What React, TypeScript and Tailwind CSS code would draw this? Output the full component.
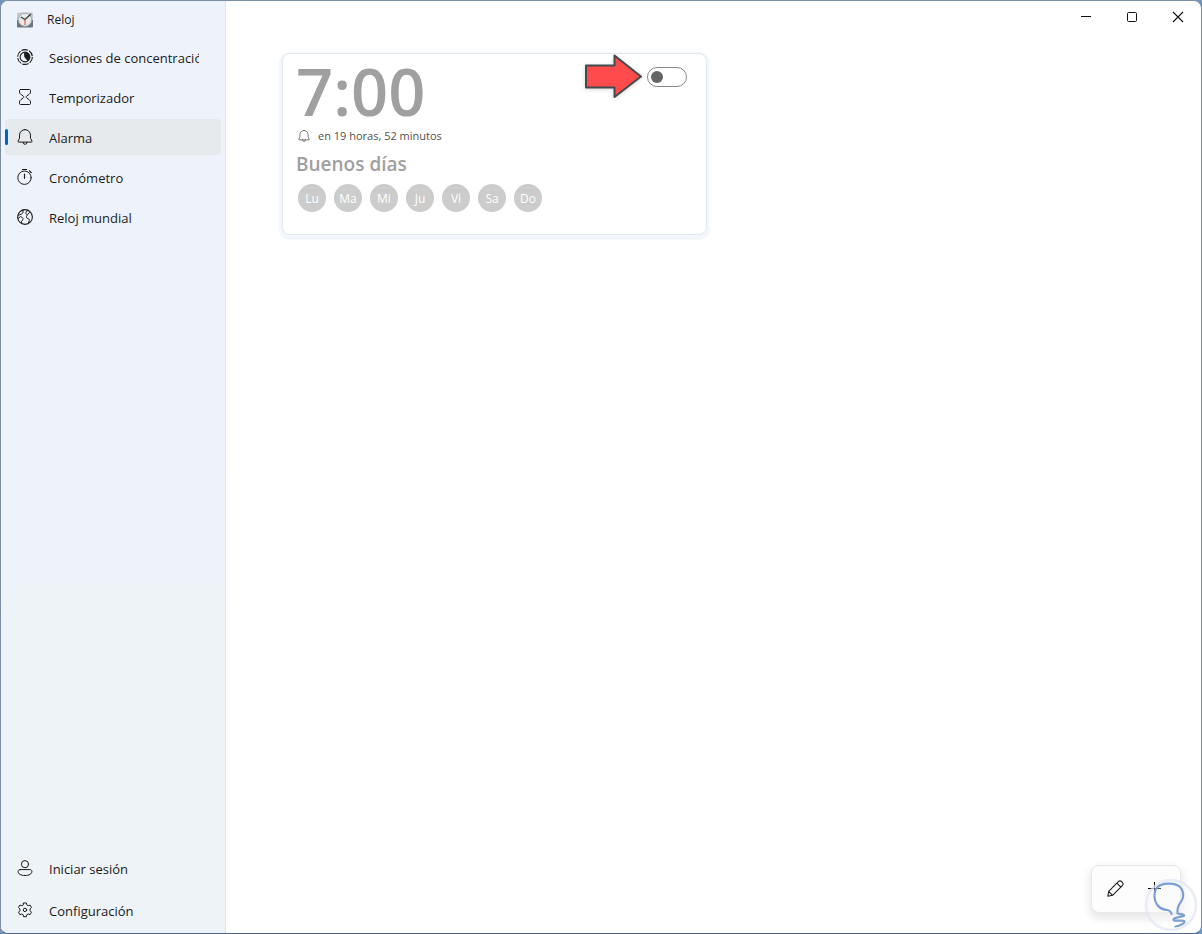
import { useState } from "react";
import type { ReactNode } from "react";

type NavItem = {
  id: string;
  label: string;
  icon: ReactNode;
};

const days = ["Lu", "Ma", "Mi", "Ju", "Vi", "Sa", "Do"];

function Icon({ children, className = "h-4 w-4" }: { children: ReactNode; className?: string }) {
  return (
    <svg
      viewBox="0 0 16 16"
      className={`shrink-0 ${className}`}
      fill="none"
      stroke="currentColor"
      strokeWidth="1"
      strokeLinecap="round"
      strokeLinejoin="round"
      aria-hidden="true"
    >
      {children}
    </svg>
  );
}

function BellIcon({ className }: { className?: string }) {
  return (
    <Icon className={className}>
      <path d="M8 .6a5.500 5.500 0 0 0-5.500 5.500v3.100L1 12.200c-.2.5.1.9.6.9h12.800c.5 0 .8-.4.6-.9l-1.500-3V6.100A5.500 5.500 0 0 0 8 .6Z" />
      <path d="M6 13.300a2 2 0 0 0 4 0" />
    </Icon>
  );
}

const topItems: NavItem[] = [
  {
    id: "focus",
    label: "Sesiones de concentración",
    icon: (
      <Icon>
        <circle cx="8" cy="8" r="7.400" strokeWidth="1.100" strokeDasharray="6.550 1.200" strokeLinecap="butt" />
        <circle cx="8" cy="8" r="4.900" strokeWidth="1.100" />
        <path d="M8 3.500a4.500 4.500 0 0 1 2.800 8L8 8.200Z" fill="currentColor" />
      </Icon>
    ),
  },
  {
    id: "timer",
    label: "Temporizador",
    icon: (
      <Icon>
        <path d="M3.500.5h9c.6 0 1 .4 1 1v1.600c0 .9-.5 1.600-1.200 2.100L9.600 7.200c-.6.4-.6 1.200 0 1.600l2.700 2c.7.5 1.200 1.200 1.200 2.100v1.600c0 .6-.4 1-1 1h-9c-.6 0-1-.4-1-1v-1.600c0-.9.5-1.600 1.200-2.100l2.700-2c.6-.4.6-1.200 0-1.600l-2.700-2C3 4.700 2.500 4 2.500 3.100V1.500c0-.6.4-1 1-1Z" />
      </Icon>
    ),
  },
  { id: "alarm", label: "Alarma", icon: <BellIcon /> },
  {
    id: "stopwatch",
    label: "Cronómetro",
    icon: (
      <Icon>
        <circle cx="7.500" cy="8.700" r="6.700" />
        <path d="M5.500.5h4M7.500 5v4.300M12.500 2l1.700 1.500" strokeWidth="1.200" />
      </Icon>
    ),
  },
  {
    id: "world",
    label: "Reloj mundial",
    icon: (
      <Icon>
        <circle cx="8" cy="8" r="7.400" strokeWidth="1.100" />
        <path d="M6 1v2.200c0 .8-.5 1.300-1.300 1.700L2 6.200M1 9.500l2.500-2 2 1.200c.8.5.8 1.300.3 2L4.500 12.500l.3 2M10.500 1.200 9 3.500c-.4.700-.2 1.300.4 1.700l.9.8-.8 1.500c-.3.700 0 1.300.6 1.600l1.700.8c.5.3.7.8.5 1.400l-.8 2.500M12.500 3.500l-1.800 2" />
      </Icon>
    ),
  },
];

const bottomItems: NavItem[] = [
  {
    id: "login",
    label: "Iniciar sesión",
    icon: (
      <Icon>
        <circle cx="8" cy="4.200" r="3.600" />
        <path d="M3.200 9.600h9.600c1.300 0 2.100.7 2.100 1.800 0 2.500-2.600 4.100-6.900 4.100s-6.900-1.600-6.900-4.100c0-1.100.8-1.800 2.100-1.800Z" />
      </Icon>
    ),
  },
  {
    id: "settings",
    label: "Configuración",
    icon: (
      <Icon>
        <path d="M6.600 1h2.800l.4 1.900 1.400.8 1.900-.6 1.400 2.400-1.400 1.400v1.900l1.400 1.400-1.400 2.400-1.900-.6-1.400.8-.4 1.900H6.600l-.4-1.900-1.400-.8-1.900.6-1.400-2.400 1.400-1.400V6.900L1.500 5.500l1.400-2.400 1.900.6 1.400-.8Z" />
        <circle cx="8" cy="7.900" r="1.700" />
      </Icon>
    ),
  },
];

function AppLogo() {
  return (
    <svg viewBox="0 0 16 16" className="h-4 w-4 shrink-0" aria-hidden="true">
      <path d="M0 2A1.500 1.500 0 0 1 1.500.5h13A1.500 1.500 0 0 1 16 2v7H0Z" fill="#c3cad0" />
      <path d="M0 8h16v6.500a1 1 0 0 1-1 1H1a1 1 0 0 1-1-1Z" fill="#687783" />
      <circle cx="8" cy="7.700" r="6.600" fill="#e9e9e9" stroke="#a3a8ac" strokeWidth="1" />
      <path d="M8 7.500V13" stroke="#e0855f" strokeWidth="1.600" />
      <path d="M3.800 5 8 7.500l6-5.500" fill="none" stroke="#3d4145" strokeWidth="1.400" />
    </svg>
  );
}

function NavButton({
  item,
  active,
  onSelect,
}: {
  item: NavItem;
  active: boolean;
  onSelect: (id: string) => void;
}) {
  return (
    <button
      type="button"
      onClick={() => onSelect(item.id)}
      aria-current={active ? "page" : undefined}
      className={`relative flex h-9 w-full items-center gap-4 rounded pr-[22px] pl-3 text-left text-[13px] leading-5 ${
        active ? "bg-[#e6eaed]" : "hover:bg-black/5"
      }`}
    >
      {active && <span className="absolute left-0 h-4 w-[3px] rounded-full bg-[#0067c0]" />}
      {item.icon}
      <span className="min-w-0 flex-1 overflow-hidden pt-0.5 whitespace-nowrap">{item.label}</span>
    </button>
  );
}

function AlarmCard() {
  const [enabled, setEnabled] = useState(false);

  return (
    <article className="relative rounded-lg border border-[#e1e8ee] bg-white px-[13px] pt-1 pb-[22px] shadow-[0_2px_2px_3px_#f3f7fb]">
      <div className="flex items-start justify-between pr-1.5">
        <h2 className="h-[70px] text-[65px] leading-[66px] font-semibold text-[#a0a0a0]">7:00</h2>
        <input
          type="checkbox"
          role="switch"
          aria-label="Activar alarma"
          checked={enabled}
          onChange={(e) => setEnabled(e.target.checked)}
          className="mt-[9px] flex h-5 w-10 appearance-none items-center rounded-full border border-[#888888] px-[3px] before:h-3 before:w-3 before:rounded-full before:bg-[#666666] checked:justify-end checked:bg-[#0067c0] checked:before:bg-white"
        />
      </div>
      <p className="flex h-4 items-center gap-2 text-[11px] text-[#505050]">
        <BellIcon className="ml-0.5 h-3 w-3" />
        en 19 horas, 52 minutos
      </p>
      <h3 className="mt-1.5 text-[19px] leading-[28px] font-semibold text-[#a0a0a0]">Buenos días</h3>
      <ul className="mt-1.5 ml-0.5 flex gap-2">
        {days.map((day) => (
          <li
            key={day}
            className="flex h-7 w-7 items-center justify-center rounded-full bg-[#cccccc] pt-0.5 text-[12px] text-white"
          >
            {day}
          </li>
        ))}
      </ul>

      {/* Pointer towards the switch */}
      <svg
        viewBox="0 0 60 46"
        className="absolute top-0 right-[63px] h-[46px] w-[60px] drop-shadow-sm"
        aria-hidden="true"
      >
        <path
          d="M3 11.500h28.500V1.500L58 22.500 31.500 43V33.500H3Z"
          fill="#ff4b4b"
          stroke="#444b4d"
          strokeWidth="2"
          strokeLinejoin="round"
        />
      </svg>
    </article>
  );
}

function WindowControls() {
  return (
    <div className="flex justify-end text-[#111111]">
      <button type="button" aria-label="Minimizar" className="flex h-8 w-[46px] items-center justify-center">
        <svg viewBox="0 0 12 12" className="h-3 w-3" aria-hidden="true">
          <path d="M1 5.500h10" stroke="currentColor" />
        </svg>
      </button>
      <button type="button" aria-label="Maximizar" className="flex h-8 w-[46px] items-center justify-center">
        <svg viewBox="0 0 12 12" className="h-3 w-3" aria-hidden="true">
          <rect x="1.500" y="1.500" width="9" height="9" rx="1" fill="none" stroke="currentColor" />
        </svg>
      </button>
      <button type="button" aria-label="Cerrar" className="flex h-8 w-[46px] items-center justify-center">
        <svg viewBox="0 0 12 12" className="h-3 w-3" aria-hidden="true">
          <path d="m1 1 10 10M11 1 1 11" stroke="currentColor" strokeWidth="1.100" />
        </svg>
      </button>
    </div>
  );
}

export default function App() {
  const [current, setCurrent] = useState("alarm");

  return (
    <div className="h-screen bg-[#7396b8] font-['Open_Sans','Noto_Sans',sans-serif] text-[#1b1b1b]">
      <div className="relative flex h-full overflow-hidden rounded-lg border border-[#7b8ea3] border-b-[#4a648c] bg-white">
        {/* Sidebar */}
        <aside className="flex w-[225px] shrink-0 flex-col border-r border-[#dfe5ea] bg-linear-to-b from-[#eef3fb] from-50% to-[#eef3f7] to-75%">
          <header className="flex h-[38px] items-center gap-3.5 px-4 text-[12px]">
            <AppLogo />
            <h1>Reloj</h1>
          </header>
          <nav className="flex flex-1 flex-col justify-between px-1 pb-[5px]">
            <div className="flex flex-col gap-1">
              {topItems.map((item) => (
                <NavButton key={item.id} item={item} active={item.id === current} onSelect={setCurrent} />
              ))}
            </div>
            <div className="flex flex-col gap-1.5">
              {bottomItems.map((item) => (
                <NavButton key={item.id} item={item} active={item.id === current} onSelect={setCurrent} />
              ))}
            </div>
          </nav>
        </aside>

        {/* Content */}
        <main className="min-w-0 flex-1">
          <WindowControls />
          <section className="mt-5 grid grid-cols-2 gap-[13px] px-14">
            <AlarmCard />
          </section>
        </main>

        {/* Floating command bar */}
        <div className="absolute right-5 bottom-5 flex rounded-lg border border-[#e9e9e9] bg-[#fdfdfd] pt-1 pr-1.5 pb-[5px] pl-1 shadow-[0_4px_8px_2px_rgba(0,0,0,0.09)]">
          <button type="button" aria-label="Editar alarmas" className="flex h-[37px] w-[39px] items-center justify-center">
            <Icon className="h-[17px] w-[17px]">
              <path d="M10.900 1.400a1.900 1.900 0 0 1 2.700 0l1 1a1.900 1.900 0 0 1 0 2.700L5.300 14.400.8 15.200l.8-4.500ZM9.300 3l3.700 3.700M1.600 10.700l3.700 3.700" />
            </Icon>
          </button>
          <button type="button" aria-label="Agregar alarma" className="flex h-[37px] w-[39px] items-center justify-center">
            <svg viewBox="0 0 13 13" className="h-[13px] w-[13px]" aria-hidden="true">
              <path d="M0 6.500h13M6.500 0v13" stroke="#000000" />
            </svg>
          </button>
        </div>

        {/* Light bulb watermark */}
        <svg viewBox="0 0 56 56" className="pointer-events-none absolute right-[2px] bottom-0 h-14 w-14" aria-hidden="true">
          <circle cx="28" cy="28" r="25" fill="#f8fafd" fillOpacity="0.300" stroke="#dfe6f4" strokeOpacity="0.700" strokeWidth="2.500" />
          <path
            d="M28.500 37c-.5-2.500-2-3.800-4.500-4-4-.3-7.500-2-10-5.500-3-4.500-3.500-11-1-15.500C15.500 8 21 6.500 27 6.700c6 .1 10 2 12 6 2 4.500 1.600 8.300-1 12-2.700 3.600-4 7-3.500 11.600 2 1 5.500.7 6.500 1.700 1.200 2-10 1.800-10.500 4.500-.4 2.500 9.500 0 10.800 1.700 1 2-4.800 4.800-8.800 5.300"
            fill="none"
            stroke="#7b9fd0"
            strokeWidth="2.200"
            strokeLinecap="round"
            strokeLinejoin="round"
          />
        </svg>
      </div>
    </div>
  );
}
